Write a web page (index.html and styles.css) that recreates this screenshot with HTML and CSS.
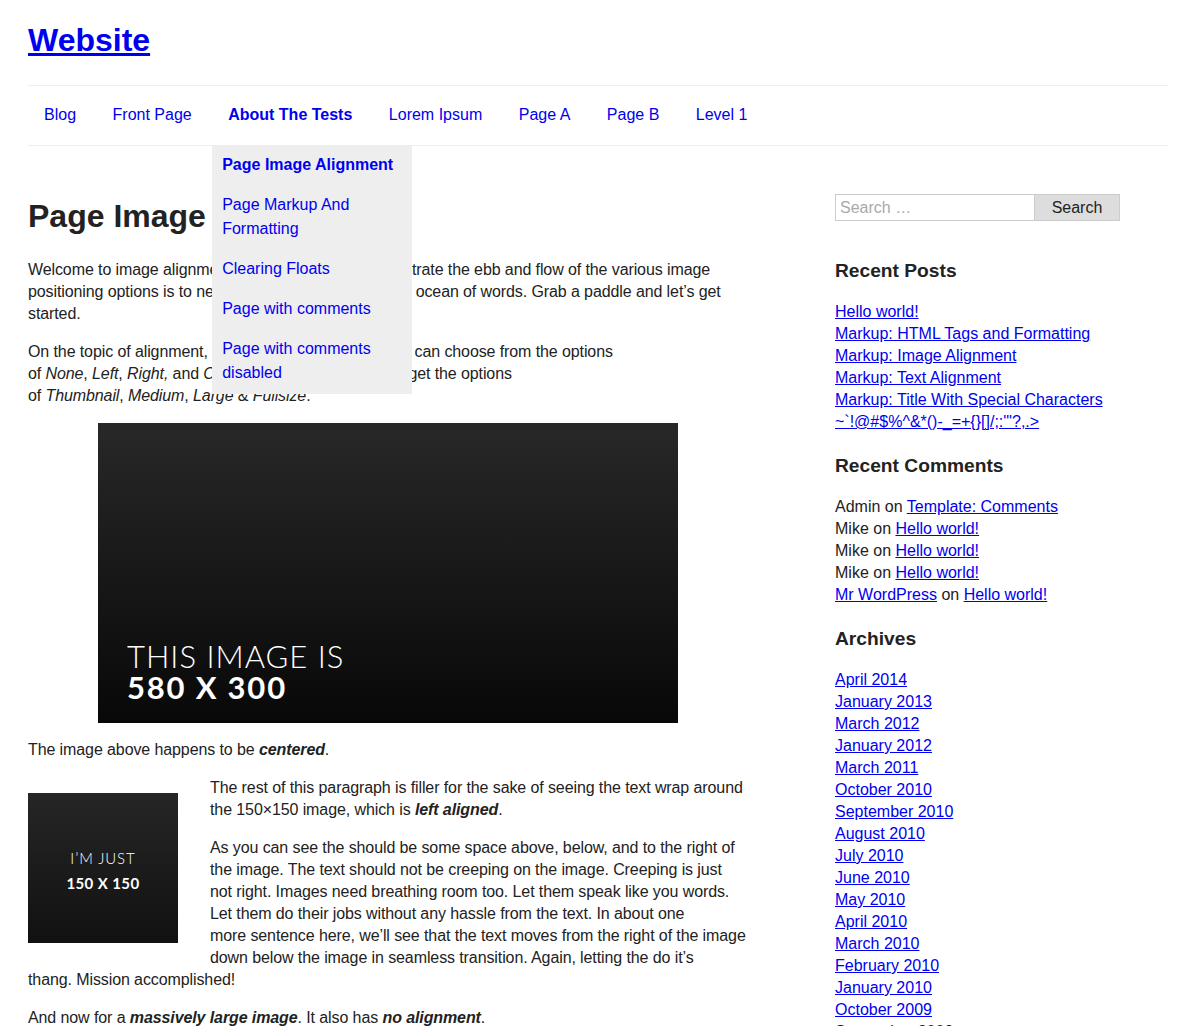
FILE: index.html
```html
<!DOCTYPE html>
<html lang="en">
<head>
<meta charset="utf-8">
<title>Page Image Alignment | Website</title>
<link rel="stylesheet" href="styles.css">
</head>
<body>
<div class="site">
  <header class="site-header">
    <h1 class="site-title"><a href="#">Website</a></h1>
  </header>
  <nav class="main-nav">
    <ul class="menu">
      <li><a href="#">Blog</a></li>
      <li><a href="#">Front Page</a></li>
      <li class="current-ancestor"><a href="#">About The Tests</a>
        <ul class="sub-menu">
          <li class="current"><a href="#">Page Image Alignment</a></li>
          <li><a href="#">Page Markup And Formatting</a></li>
          <li><a href="#">Clearing Floats</a></li>
          <li><a href="#">Page with comments</a></li>
          <li><a href="#">Page with comments disabled</a></li>
        </ul>
      </li>
      <li><a href="#">Lorem Ipsum</a></li>
      <li><a href="#">Page A</a></li>
      <li><a href="#">Page B</a></li>
      <li><a href="#">Level 1</a></li>
    </ul>
  </nav>
  <div class="layout">
    <main class="content">
      <h1 class="entry-title">Page Image Alignment</h1>
      <p>Welcome to image alignment! The best way to demonstrate the ebb and flow of the various image positioning options is to nestle them snuggly among an ocean of words. Grab a paddle and let’s get started.</p>
      <p>On the topic of alignment, it should be noted that users can choose from the options<br>of&nbsp;<em>None</em>, <em>Left</em>, <em>Right, </em>and&nbsp;<em>Center</em>. In addition, they also get the options<br>of&nbsp;<em>Thumbnail</em>, <em>Medium</em>, <em>Large</em> &amp; <em>Fullsize</em>.</p>
      <div class="img-center">
        <div class="ph ph-large">
          <span class="ph-light">THIS IMAGE IS</span>
          <span class="ph-bold">580 X 300</span>
        </div>
      </div>
      <p>The image above happens to be <strong><em>centered</em></strong>.</p>
      <div class="ph ph-small">
        <span class="ph-light">I’M JUST</span>
        <span class="ph-bold">150 X 150</span>
      </div>
      <p>The rest of this paragraph is filler for the sake of seeing the text wrap around the 150×150 image, which is <strong><em>left aligned</em></strong>.</p>
      <p>As you can see the should be some space above, below, and to the right of the image. The text should not be creeping on the image. Creeping is just not right. Images need breathing room too. Let them speak like you words. Let them do their jobs without any hassle from the text. In about one<br>more&nbsp;sentence here, we’ll see that the text moves from the right of the image down below the image in seamless transition. Again, letting the do it’s<br>thang. Mission accomplished!</p>
      <p class="clear">And now for a <strong><em>massively large image</em></strong>. It also has <strong><em>no alignment</em></strong>.</p>
      <div class="ph ph-huge">
        <span class="ph-light">THIS IMAGE IS</span>
        <span class="ph-bold">1200 X 400</span>
      </div>
    </main>
    <aside class="sidebar">
      <form class="search-form">
        <input class="search-field" type="search" placeholder="Search …">
        <button class="search-submit" type="button">Search</button>
      </form>
      <section class="widget">
        <h2 class="widget-title">Recent Posts</h2>
        <ul class="widget-list">
          <li><a href="#">Hello world!</a></li>
          <li><a href="#">Markup: HTML Tags and Formatting</a></li>
          <li><a href="#">Markup: Image Alignment</a></li>
          <li><a href="#">Markup: Text Alignment</a></li>
          <li><a href="#">Markup: Title With Special Characters ~`!@#$%^&amp;*()-_=+{}[]/;:'"?,.&gt;</a></li>
        </ul>
      </section>
      <section class="widget">
        <h2 class="widget-title">Recent Comments</h2>
        <ul class="widget-list">
          <li>Admin on <a href="#">Template: Comments</a></li>
          <li>Mike on <a href="#">Hello world!</a></li>
          <li>Mike on <a href="#">Hello world!</a></li>
          <li>Mike on <a href="#">Hello world!</a></li>
          <li><a href="#">Mr WordPress</a> on <a href="#">Hello world!</a></li>
        </ul>
      </section>
      <section class="widget">
        <h2 class="widget-title">Archives</h2>
        <ul class="widget-list">
          <li><a href="#">April 2014</a></li>
          <li><a href="#">January 2013</a></li>
          <li><a href="#">March 2012</a></li>
          <li><a href="#">January 2012</a></li>
          <li><a href="#">March 2011</a></li>
          <li><a href="#">October 2010</a></li>
          <li><a href="#">September 2010</a></li>
          <li><a href="#">August 2010</a></li>
          <li><a href="#">July 2010</a></li>
          <li><a href="#">June 2010</a></li>
          <li><a href="#">May 2010</a></li>
          <li><a href="#">April 2010</a></li>
          <li><a href="#">March 2010</a></li>
          <li><a href="#">February 2010</a></li>
          <li><a href="#">January 2010</a></li>
          <li><a href="#">October 2009</a></li>
          <li><a href="#">September 2009</a></li>
          <li><a href="#">August 2009</a></li>
        </ul>
      </section>
    </aside>
  </div>
</div>
</body>
</html>
```

FILE: styles.css
```css
* { box-sizing: border-box; }

html, body {
  margin: 0;
  padding: 0;
  background: #fff;
}

body {
  font-family: "Liberation Sans", Arial, Helvetica, sans-serif;
  font-size: 16px;
  line-height: 22px;
  color: #222;
}

a { color: #0000ee; }

.site {
  width: 1140px;
  margin-left: 28px;
}

/* Header */
.site-header {
  padding-top: 20px;
  padding-bottom: 25px;
}

.site-title {
  margin: 0;
  font-size: 32px;
  line-height: 40px;
  font-weight: bold;
}

.site-title a { color: #0000ee; }

/* Navigation */
.main-nav {
  border-top: 1px solid #eee;
  border-bottom: 1px solid #eee;
}

.menu {
  list-style: none;
  margin: 0;
  padding: 0;
  display: flex;
  gap: 4.5px;
}

.menu > li {
  position: relative;
}

.menu > li > a {
  display: block;
  padding: 17px 16px 18px;
  line-height: 24px;
  text-decoration: none;
  color: #0000ee;
}

.menu > li.current-ancestor > a { font-weight: bold; }

.sub-menu {
  position: absolute;
  top: calc(100% + 1px);
  left: 0;
  width: 200px;
  margin: 0;
  padding: 0;
  list-style: none;
  background: #eee;
  z-index: 10;
}

.sub-menu a {
  display: block;
  padding: 7px 10px 9px;
  line-height: 24px;
  text-decoration: none;
  color: #0000ee;
}

.sub-menu .current a { font-weight: bold; }

/* Layout */
.layout {
  display: grid;
  grid-template-columns: 720px 1fr;
  column-gap: 87px;
}

.content {
  padding-top: 50px;
}

.entry-title {
  margin: 0 0 23px;
  font-size: 32px;
  line-height: 40px;
  font-weight: bold;
  color: #222;
}

.content p {
  margin: 0 0 16px;
  letter-spacing: -0.1px;
}

.img-center {
  display: flex;
  justify-content: center;
  margin: 16px 0 16px;
}

.ph {
  display: flex;
  flex-direction: column;
  color: #fff;
  font-family: "Lato", "Open Sans", sans-serif;
  background: linear-gradient(#282828, #080808);
}

.ph-large {
  width: 580px;
  height: 300px;
  justify-content: flex-end;
  padding: 0 0 20px 29px;
  font-size: 31px;
  line-height: 31px;
}

.ph-large .ph-light { font-weight: 300; letter-spacing: 1px; }
.ph-large .ph-bold { font-weight: 700; letter-spacing: 1.8px; }

.ph-small {
  float: left;
  width: 150px;
  height: 150px;
  margin: 16px 32px 16px 0;
  padding-top: 5px;
  justify-content: center;
  align-items: center;
  font-size: 15px;
  line-height: 25px;
  background: linear-gradient(#262626, #111);
}

.ph-small .ph-light { font-weight: 300; letter-spacing: 0.9px; }
.ph-small .ph-bold { font-weight: 700; letter-spacing: 0.4px; }

.ph-huge {
  width: 720px;
  height: 240px;
  justify-content: flex-end;
  padding: 0 0 18px 29px;
  font-size: 31px;
  line-height: 31px;
}

.clear { clear: both; }

/* Sidebar */
.sidebar {
  padding-top: 48px;
}

.search-form {
  display: flex;
  margin-bottom: 37.5px;
}

.search-field {
  width: 200px;
  height: 27px;
  margin: 0;
  padding: 1px 4px;
  border: 1px solid #ccc;
  font-family: "Liberation Sans", Arial, sans-serif;
  font-size: 16px;
  color: #222;
}

.search-field::placeholder { color: #aaa; }

.search-submit {
  width: 85px;
  height: 27px;
  margin: 0;
  padding: 0;
  border: 1px solid #ccc;
  border-left: none;
  background: #ddd;
  font-family: "Liberation Sans", Arial, sans-serif;
  font-size: 16px;
  color: #222;
}

.widget {
  margin-bottom: 20.5px;
}

.widget-title {
  margin: 0 0 18.5px;
  font-size: 19.2px;
  line-height: 24px;
  font-weight: bold;
  color: #222;
}

.widget-list {
  list-style: none;
  margin: 0;
  padding: 0;
}
```
